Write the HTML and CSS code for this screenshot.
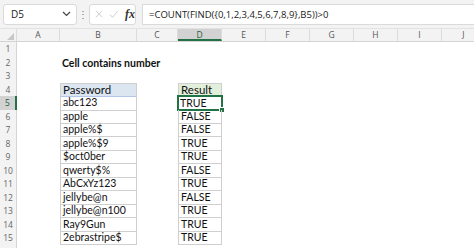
FILE: index.html
```html
<!DOCTYPE html>
<html lang="en">
<head>
    <meta charset="UTF-8">
    <title>Cell contains number</title>
    <link rel="stylesheet" href="styles.css">
</head>
<body>

<!-- Barra de fórmulas -->
<div class="toolbar">
    <div class="namebox">
        <span>D5</span>
        <svg width="9" height="6" viewBox="0 0 9 6"><path d="M1 1 L4.5 4.5 L8 1" fill="none" stroke="#444" stroke-width="1.2"/></svg>
    </div>
    <div class="dots">⋮</div>
    <div class="fxbox">
        <svg width="10" height="10" viewBox="0 0 10 10"><path d="M1 1 L9 9 M9 1 L1 9" stroke="#c4c4c4" stroke-width="1"/></svg>
        <svg width="12" height="10" viewBox="0 0 12 10"><path d="M1 6 L4.5 9 L11 1" fill="none" stroke="#c4c4c4" stroke-width="1"/></svg>
        <span class="fx">fx</span>
    </div>
    <div class="formula">=COUNT(FIND({0,1,2,3,4,5,6,7,8,9},B5))&gt;0</div>
</div>

<!-- Hoja -->
<div class="sheet">
    <div class="row head">
        <div class="corner"><span class="tri"></span></div>
        <div>A</div><div>B</div><div>C</div><div class="sel">D</div><div>E</div><div>F</div><div>G</div><div>H</div><div>I</div><div>J</div>
    </div>
    <div class="row"><div class="rh">1</div></div>
    <div class="row"><div class="rh">2</div><div></div><div class="title">Cell contains number</div></div>
    <div class="row"><div class="rh">3</div></div>
    <div class="row"><div class="rh">4</div><div></div><div class="cell top hb">Password</div><div></div><div class="cell top hd">Result</div></div>
    <div class="row"><div class="rh on">5</div><div></div><div class="cell">abc123</div><div></div><div class="cell active">TRUE<span class="handle"></span></div></div>
    <div class="row"><div class="rh">6</div><div></div><div class="cell">apple</div><div></div><div class="cell">FALSE</div></div>
    <div class="row"><div class="rh">7</div><div></div><div class="cell">apple%$</div><div></div><div class="cell">FALSE</div></div>
    <div class="row"><div class="rh">8</div><div></div><div class="cell">apple%$9</div><div></div><div class="cell">TRUE</div></div>
    <div class="row"><div class="rh">9</div><div></div><div class="cell">$oct0ber</div><div></div><div class="cell">TRUE</div></div>
    <div class="row"><div class="rh">10</div><div></div><div class="cell">qwerty$%</div><div></div><div class="cell">FALSE</div></div>
    <div class="row"><div class="rh">11</div><div></div><div class="cell">AbCxYz123</div><div></div><div class="cell">TRUE</div></div>
    <div class="row"><div class="rh">12</div><div></div><div class="cell">jellybe@n</div><div></div><div class="cell">FALSE</div></div>
    <div class="row"><div class="rh">13</div><div></div><div class="cell">jellybe@n100</div><div></div><div class="cell">TRUE</div></div>
    <div class="row"><div class="rh">14</div><div></div><div class="cell">Ray9Gun</div><div></div><div class="cell">TRUE</div></div>
    <div class="row"><div class="rh">15</div><div></div><div class="cell">2ebrastripe$</div><div></div><div class="cell">TRUE</div></div>
    <div class="row"><div class="rh"></div></div>
</div>

</body>
</html>
```

FILE: styles.css
```css
body {
    margin: 0;
    padding: 0;
    background-color: #ffffff;
    font-family: Lato, "Open Sans", sans-serif;
    overflow: hidden;
}
.toolbar {
    display: flex;
    align-items: center;
    height: 28px;
    padding: 0 0 0 3px;
    background-color: #f3f3f3; /* Gris claro de la barra */
    box-sizing: border-box;
}
.namebox {
    display: flex;
    align-items: center;
    justify-content: space-between;
    width: 74px;
    height: 21px;
    padding: 0 5px 0 7px;
    box-sizing: border-box;
    background-color: #fff;
    border: 1px solid #dadada;
    border-radius: 3px;
    font-family: "Open Sans", sans-serif;
    font-size: 10px;
    color: #222;
}
.dots {
    width: 9px;
    text-align: center;
    font-size: 10px;
    color: #777;
    margin-left: 1px;
}
.fxbox {
    display: flex;
    align-items: center;
    gap: 6px;
    width: 47px;
    height: 21px;
    padding-left: 5px;
    margin-left: 2px;
    box-sizing: border-box;
    background-color: #fff;
    border: 1px solid #dadada;
    border-radius: 3px;
}
.fx {
    font-family: "Liberation Serif", serif;
    font-style: italic;
    font-weight: bold;
    font-size: 12px;
    color: #333;
}
.formula {
    flex: 1;
    height: 21px;
    line-height: 20px;
    margin-left: 6px;
    padding-left: 6px;
    box-sizing: border-box;
    background-color: #fff;
    border: 1px solid #dadada;
    border-right: none;
    font-family: "Open Sans", sans-serif;
    font-size: 9.5px;
    color: #222;
}
.sheet {
    border-top: 1px solid #e2e2e2;
}
.row {
    display: grid;
    grid-template-columns: 17px 43px 77px 41px 44px 44px 44px 44px 44px 44px 44px;
    height: 13.5px;
    font-size: 10.5px;
    color: #111;
}
.row.head {
    height: 12px;
    background-color: #f3f3f3;
    border-bottom: 1px solid #d4d4d4;
}
.row.head div {
    text-align: center;
    font-family: "Open Sans", sans-serif;
    font-size: 8.5px;
    line-height: 12px;
    color: #555;
    border-right: 1px solid #dcdcdc;
    position: relative;
}
.row.head div.sel {
    background-color: #d2d2d2;
    color: #1e5e37;
    border-bottom: 2px solid #217346;
    height: 10px;
    line-height: 11px;
}
.corner .tri {
    position: absolute;
    right: 2px;
    bottom: 1px;
    border-left: 7px solid transparent;
    border-bottom: 7px solid #c8c8c8;
}
.rh {
    background-color: #f3f3f3;
    border-right: 1px solid #d4d4d4;
    text-align: center;
    font-family: "Open Sans", sans-serif;
    font-size: 8.5px;
    line-height: 14px;
    color: #666;
}
.rh.on {
    background-color: #d2d2d2;
    color: #1e5e37;
    border-right: 2px solid #217346;
}
.title {
    grid-column: 3 / 6;
    padding-left: 2px;
    font-weight: bold;
    line-height: 15px;
}
.cell {
    position: relative;
    padding-left: 2px;
    line-height: 13px;
    border: 1px solid #cfcfcf;
    border-top: none;
    white-space: nowrap;
}
.cell.top {
    border-top: 1px solid #cfcfcf;
    border-bottom-color: #b4c6e7;
    line-height: 12px;
    font-size: 11.5px;
}
.hb {
    background-color: #dce6f1; /* Encabezado azul */
}
.hd {
    background-color: #e2efda; /* Encabezado verde */
    border-bottom-color: #c6e0b4;
}
.cell.active {
    border: 2px solid #217346;
    margin-top: -1px;
    line-height: 12px;
    padding-left: 1px;
    margin-left: -1px;
    margin-right: -1px;
}
.handle {
    position: absolute;
    right: -4px;
    bottom: -4px;
    width: 4px;
    height: 4px;
    background-color: #217346;
    border: 1px solid #fff;
}
```
